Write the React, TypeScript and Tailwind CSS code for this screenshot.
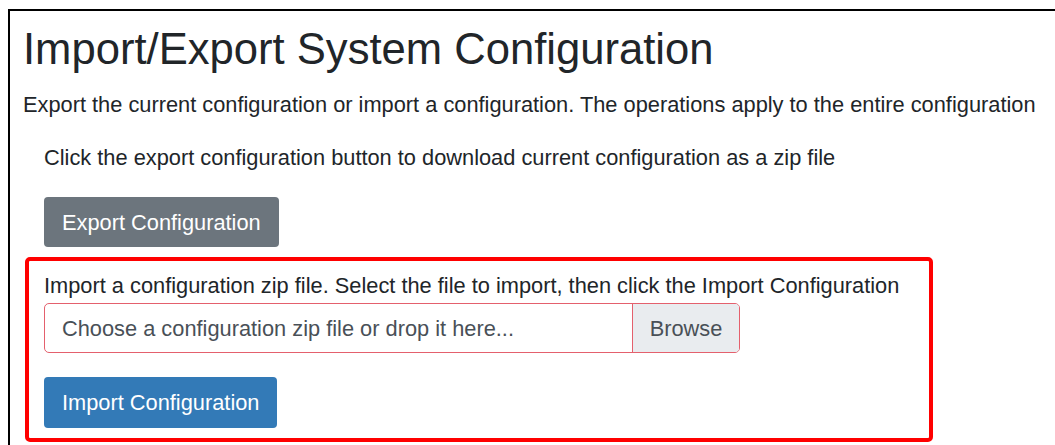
export default function App() {
  return (
    <div className="min-h-[445px] bg-white pl-2 pt-[9px] font-['Liberation_Sans',Arial,sans-serif] text-[#212529]">
      <div className="border-l-2 border-t-2 border-black pl-[13px] pt-[12px] h-[436px]">
        <h1 className="text-[43.6px] leading-[53px]">Import/Export System Configuration</h1>
        <p className="mt-[12px] text-[21.8px] leading-[33px] whitespace-nowrap">
          Export the current configuration or import a configuration. The operations apply to the entire configuration
        </p>

        <div className="pl-[21px] mt-[20px]">
          <p className="text-[21.8px] leading-[33px]">
            Click the export configuration button to download current configuration as a zip file
          </p>
          <button className="mt-[23px] h-[50px] px-[18px] rounded-[4px] bg-[#6c757d] text-white text-[21.8px] leading-[33px]">
            Export Configuration
          </button>
        </div>

        {/* import section, outlined in red */}
        <div className="ml-[2px] mt-[10px] w-[908px] border-4 border-[#ff0000] rounded-[5px] pl-[15px] pt-[8px] pb-[10px]">
          <p className="text-[21.8px] leading-[33px]">
            Import a configuration zip file. Select the file to import, then click the Import Configuration
          </p>
          <div className="mt-px flex w-[696px] h-[50px] border border-[#e4606d] rounded-[5px] overflow-hidden text-[21.8px] leading-[33px] text-[#495057]">
            <div className="flex-1 flex items-center pl-[17px]">
              Choose a configuration zip file or drop it here...
            </div>
            <div className="w-[107px] flex items-center justify-center border-l border-[#e4606d] bg-[#e9ecef]">
              Browse
            </div>
          </div>
          <button className="mt-[24px] h-[51px] px-[18px] rounded-[4px] bg-[#337ab7] text-white text-[21.8px] leading-[33px]">
            Import Configuration
          </button>
        </div>
      </div>
    </div>
  );
}
